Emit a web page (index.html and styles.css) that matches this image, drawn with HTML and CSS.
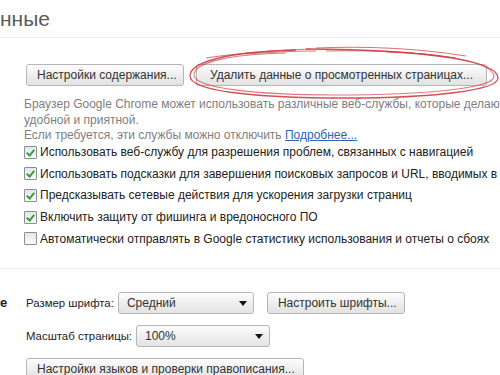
FILE: index.html
```html
<!DOCTYPE html>
<html lang="ru">
<head>
<meta charset="utf-8">
<title>Настройки</title>
<link rel="stylesheet" href="styles.css">
</head>
<body>
<div class="page">
  <h1 class="title">нные</h1>
  <div class="section privacy">
    <div class="btn-row">
      <button class="btn btn-content">Настройки содержания...</button>
      <button class="btn btn-clear">Удалить данные о просмотренных страницах...</button>
    </div>
    <p class="desc">Браузер Google Chrome может использовать различные веб-службы, которые делают работу в Интернете<br>удобной и приятной.<br>Если требуется, эти службы можно отключить <a class="link" href="#">Подробнее...</a></p>
    <ul class="checks">
      <li><span class="cb on"></span>Использовать веб-службу для разрешения проблем, связанных с навигацией</li>
      <li><span class="cb on"></span>Использовать подсказки для завершения поисковых запросов и URL, вводимых в адресную строку</li>
      <li><span class="cb on"></span>Предсказывать сетевые действия для ускорения загрузки страниц</li>
      <li><span class="cb on"></span>Включить защиту от фишинга и вредоносного ПО</li>
      <li><span class="cb"></span>Автоматически отправлять в Google статистику использования и отчеты о сбоях</li>
    </ul>
    <svg class="scribble" width="320" height="60" viewBox="0 0 320 60" aria-hidden="true">
      <path d="M110 6 C 40 8, 4 18, 4 32 C 4 46, 60 54, 160 54 C 250 54, 312 46, 312 34 C 312 18, 250 6, 120 5" fill="none" stroke="#c8323a" stroke-width="1.3" opacity="0.85"/>
      <path d="M200 8 C 270 10, 306 20, 308 32 C 310 44, 240 51, 150 51 C 70 51, 8 44, 8 31 C 8 17, 50 10, 100 9" fill="none" stroke="#d04048" stroke-width="1.1" opacity="0.7"/>
      <path d="M20 14 C 60 8, 100 6, 125 5 M 60 10 C 90 8, 110 7, 130 7 M 130 4 C 180 2, 230 4, 280 12 M 140 7 C 190 6, 230 8, 270 14" fill="none" stroke="#d04048" stroke-width="1" opacity="0.75"/>
    </svg>
  </div>
  <div class="section content">
    <div class="sec-title">е</div>
    <div class="sec-body">
      <div class="row">
        <span class="lbl">Размер шрифта:</span>
        <div class="select sel-size"><span>Средний</span><span class="arrow"></span></div>
        <button class="btn btn-fonts">Настроить шрифты...</button>
      </div>
      <div class="row">
        <span class="lbl">Масштаб страницы:</span>
        <div class="select sel-zoom"><span>100%</span><span class="arrow"></span></div>
      </div>
      <div class="row">
        <button class="btn btn-lang">Настройки языков и проверки правописания...</button>
      </div>
    </div>
  </div>
</div>
</body>
</html>
```
FILE: styles.css
```css
html, body {
  margin: 0;
  padding: 0;
  background: #fff;
  overflow: hidden;
}
.page {
  width: 500px;
  height: 375px;
  overflow: hidden;
  font-family: "Liberation Sans", Arial, sans-serif;
  font-size: 12px;
  color: #222;
}
.title {
  margin: 0;
  padding: 6px 0 0 0;
  height: 31px;
  font-weight: normal;
  font-size: 21px;
  line-height: 26px;
  color: #5b5b5b;
  border-bottom: 1px solid #ececec;
}
.section {
  position: relative;
}
.privacy {
  padding: 26px 0 0 24px;
  height: 204px;
  border-bottom: 1px solid #ececec;
}
.btn-row {
  display: flex;
  gap: 12px;
  padding-left: 2px;
}
.btn {
  font-family: "Liberation Sans", Arial, sans-serif;
  font-size: 12px;
  color: #333;
  height: 22px;
  padding: 0 10px;
  border: 1px solid #b6b6b6;
  border-radius: 3px;
  background: linear-gradient(#fdfdfd, #ececec 60%, #e2e2e2);
  white-space: nowrap;
  line-height: 20px;
}
.btn-content {
  width: 158px;
}
.btn-clear {
  width: 291px;
}
.desc {
  margin: 11px 0 0 0;
  color: #808080;
  font-size: 12px;
  line-height: 15.5px;
  white-space: nowrap;
}
.link {
  color: #2d63b0;
  text-decoration: underline;
}
.checks {
  list-style: none;
  margin: -2px 0 0 0;
  padding: 0;
}
.checks li {
  display: flex;
  align-items: center;
  height: 21.6px;
  white-space: nowrap;
  font-size: 12px;
  color: #222;
}
.cb {
  flex: none;
  width: 11px;
  height: 11px;
  border: 1px solid #8a8f96;
  border-radius: 1px;
  background: linear-gradient(#e4e6e8, #fafafa);
  margin-right: 3px;
  position: relative;
}
.cb.on::after {
  content: "";
  position: absolute;
  left: 3px;
  top: 1px;
  width: 3px;
  height: 6px;
  border: solid #3c9a3c;
  border-width: 0 2px 2px 0;
  transform: rotate(40deg);
}
.scribble {
  position: absolute;
  left: 186px;
  top: 6px;
}
.content {
  display: flex;
  padding-top: 23px;
}
.sec-title {
  width: 26px;
  flex: none;
  font-weight: bold;
  font-size: 13px;
  line-height: 22px;
  color: #222;
}
.sec-body {
  display: flex;
  flex-direction: column;
  gap: 11px;
}
.row {
  display: flex;
  align-items: center;
  gap: 4px;
  height: 22px;
}
.lbl {
  white-space: nowrap;
  color: #222;
  font-size: 11.4px;
}
.select {
  display: flex;
  align-items: center;
  justify-content: space-between;
  padding: 0 6px 0 8px;
  border: 1px solid #b6b6b6;
  border-radius: 3px;
  background: linear-gradient(#fdfdfd, #ececec 60%, #e4e4e4);
  color: #333;
  box-sizing: border-box;
  height: 22px;
}
.sel-size {
  width: 136px;
  margin-right: 9px;
}
.sel-zoom {
  width: 134px;
}
.btn-fonts {
  width: 138px;
}
.btn-lang {
  width: 278px;
}
.arrow {
  width: 0;
  height: 0;
  border-left: 4px solid transparent;
  border-right: 4px solid transparent;
  border-top: 5px solid #111;
}
```
